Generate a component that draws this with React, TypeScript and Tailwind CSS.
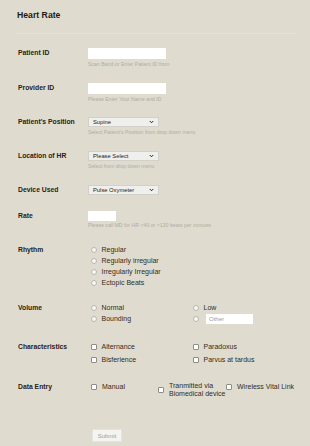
import React from "react";

const label = "w-[70px] shrink-0 text-[6.8px] font-bold text-[#2a2118] leading-[10px]";
const hint = "text-[5.2px] leading-[7px] text-[#b0ada2] whitespace-nowrap";

function Radio() {
  return <span className="h-[6px] w-[6px] shrink-0 rounded-full border-[0.5px] border-[#b9b7b0] bg-[#f7f7f5]" />;
}

function Box() {
  return <span className="h-[6px] w-[6px] shrink-0 rounded-[1px] border-[0.5px] border-[#8f8d88] bg-white" />;
}

function Option({ kind, text, h = "h-[11px]" }: { kind: "radio" | "box"; text: string; h?: string }) {
  return (
    <div className={`flex items-center gap-[4.5px] ${h}`}>
      {kind === "radio" ? <Radio /> : <Box />}
      <span className="text-[7px] leading-[8px] text-[#352b22] whitespace-nowrap">{text}</span>
    </div>
  );
}

function Select({ value }: { value: string }) {
  return (
    <div className="flex h-[10px] w-[71px] items-center justify-between border-[0.5px] border-[#d2d0c8] bg-[#efefed] pl-[4px] pr-[4px]">
      <span className="text-[5.8px] leading-[8px] text-[#222]">{value}</span>
      <svg width="5" height="4" viewBox="0 0 10 8">
        <path d="M1.5 2 L5 5.5 L8.5 2" fill="none" stroke="#222" strokeWidth="2" />
      </svg>
    </div>
  );
}

export default function App() {
  return (
    <div className="min-h-[446px] w-full bg-[#dfdccf] px-[15px] pt-[10px] font-['Liberation_Sans',Arial,sans-serif]">
      <h1 className="h-[10px] pl-[2px] text-[8.7px] font-bold leading-[10px] text-[#1f1a14]">Heart Rate</h1>
      <div className="mt-[13px] border-t border-[#e6e4da]" />

      <div className="mt-[14px] flex pl-[3px]">
        <div className={label}>Patient ID</div>
        <div>
          <div className="h-[11px] w-[78px] bg-white" />
          <div className={`mt-[2px] ${hint}`}>Scan Band or Enter Patient ID from</div>
        </div>
      </div>

      <div className="mt-[15px] flex pl-[3px]">
        <div className={label}>Provider ID</div>
        <div>
          <div className="h-[11px] w-[78px] bg-white" />
          <div className={`mt-[2px] ${hint}`}>Please Enter Your Name and ID</div>
        </div>
      </div>

      <div className="mt-[14px] flex pl-[3px]">
        <div className={label}>Patient's Position</div>
        <div>
          <Select value="Supine" />
          <div className={`mt-[2px] ${hint}`}>Select Patient's Position from drop down menu</div>
        </div>
      </div>

      <div className="mt-[15px] flex pl-[3px]">
        <div className={label}>Location of HR</div>
        <div>
          <Select value="Please Select" />
          <div className={`mt-[2px] ${hint}`}>Select from drop down menu</div>
        </div>
      </div>

      <div className="mt-[15px] flex pl-[3px]">
        <div className={label}>Device Used</div>
        <Select value="Pulse Oxymeter" />
      </div>

      <div className="mt-[16px] flex pl-[3px]">
        <div className={label}>Rate</div>
        <div>
          <div className="h-[10px] w-[28px] bg-white" />
          <div className={`mt-[1px] ${hint}`}>Please call MD for HR &lt;40 or &gt;120 beats per minutes</div>
        </div>
      </div>

      <div className="mt-[15px] flex pl-[3px]">
        <div className={`${label} pt-[1px]`}>Rhythm</div>
        <div className="pl-[3px]">
          <Option kind="radio" text="Regular" />
          <Option kind="radio" text="Regularly irregular" />
          <Option kind="radio" text="Irregularly Irregular" />
          <Option kind="radio" text="Ectopic Beats" />
        </div>
      </div>

      <div className="mt-[14px] flex pl-[3px]">
        <div className={`${label} pt-[1px]`}>Volume</div>
        <div className="grid grid-cols-[102px_auto] pl-[3px]">
          <Option kind="radio" text="Normal" />
          <Option kind="radio" text="Low" />
          <Option kind="radio" text="Bounding" h="h-[12px]" />
          <div className="flex h-[12px] items-center gap-[7px]">
            <Radio />
            <div className="flex h-[10px] w-[47px] items-center bg-white pl-[3px] text-[6px] text-[#9a9a9a]">Other</div>
          </div>
        </div>
      </div>

      <div className="mt-[15px] flex pl-[3px]">
        <div className={`${label} pt-[2px]`}>Characteristics</div>
        <div className="grid grid-cols-[102px_auto] pl-[3px]">
          <Option kind="box" text="Alternance" h="h-[13px]" />
          <Option kind="box" text="Paradoxus" h="h-[13px]" />
          <Option kind="box" text="Bisferience" h="h-[13px]" />
          <Option kind="box" text="Parvus at tardus" h="h-[13px]" />
        </div>
      </div>

      <div className="mt-[16px] flex pl-[3px]">
        <div className={label}>Data Entry</div>
        <div className="grid grid-cols-[67px_68px_auto] items-start pl-[3px]">
          <div className="flex items-center gap-[5px] pt-[1px]">
            <Box />
            <span className="text-[7px] leading-[8px] text-[#352b22]">Manual</span>
          </div>
          <div className="flex items-center gap-[5px]">
            <Box />
            <span className="text-[7px] leading-[8px] text-[#352b22]">
              Tranmitted via
              <br />
              Biomedical device
            </span>
          </div>
          <div className="flex items-center gap-[5px] pt-[1px]">
            <Box />
            <span className="whitespace-nowrap text-[7px] leading-[8px] text-[#352b22]">Wireless Vital Link</span>
          </div>
        </div>
      </div>

      <div className="mt-[23px] pl-[77px]">
        <button className="h-[13px] w-[30px] rounded-[1px] border-[0.5px] border-[#e4e3de] bg-[#f4f4f1] text-[6px] leading-[12px] text-[#9c9c98]">
          Submit
        </button>
      </div>
    </div>
  );
}
